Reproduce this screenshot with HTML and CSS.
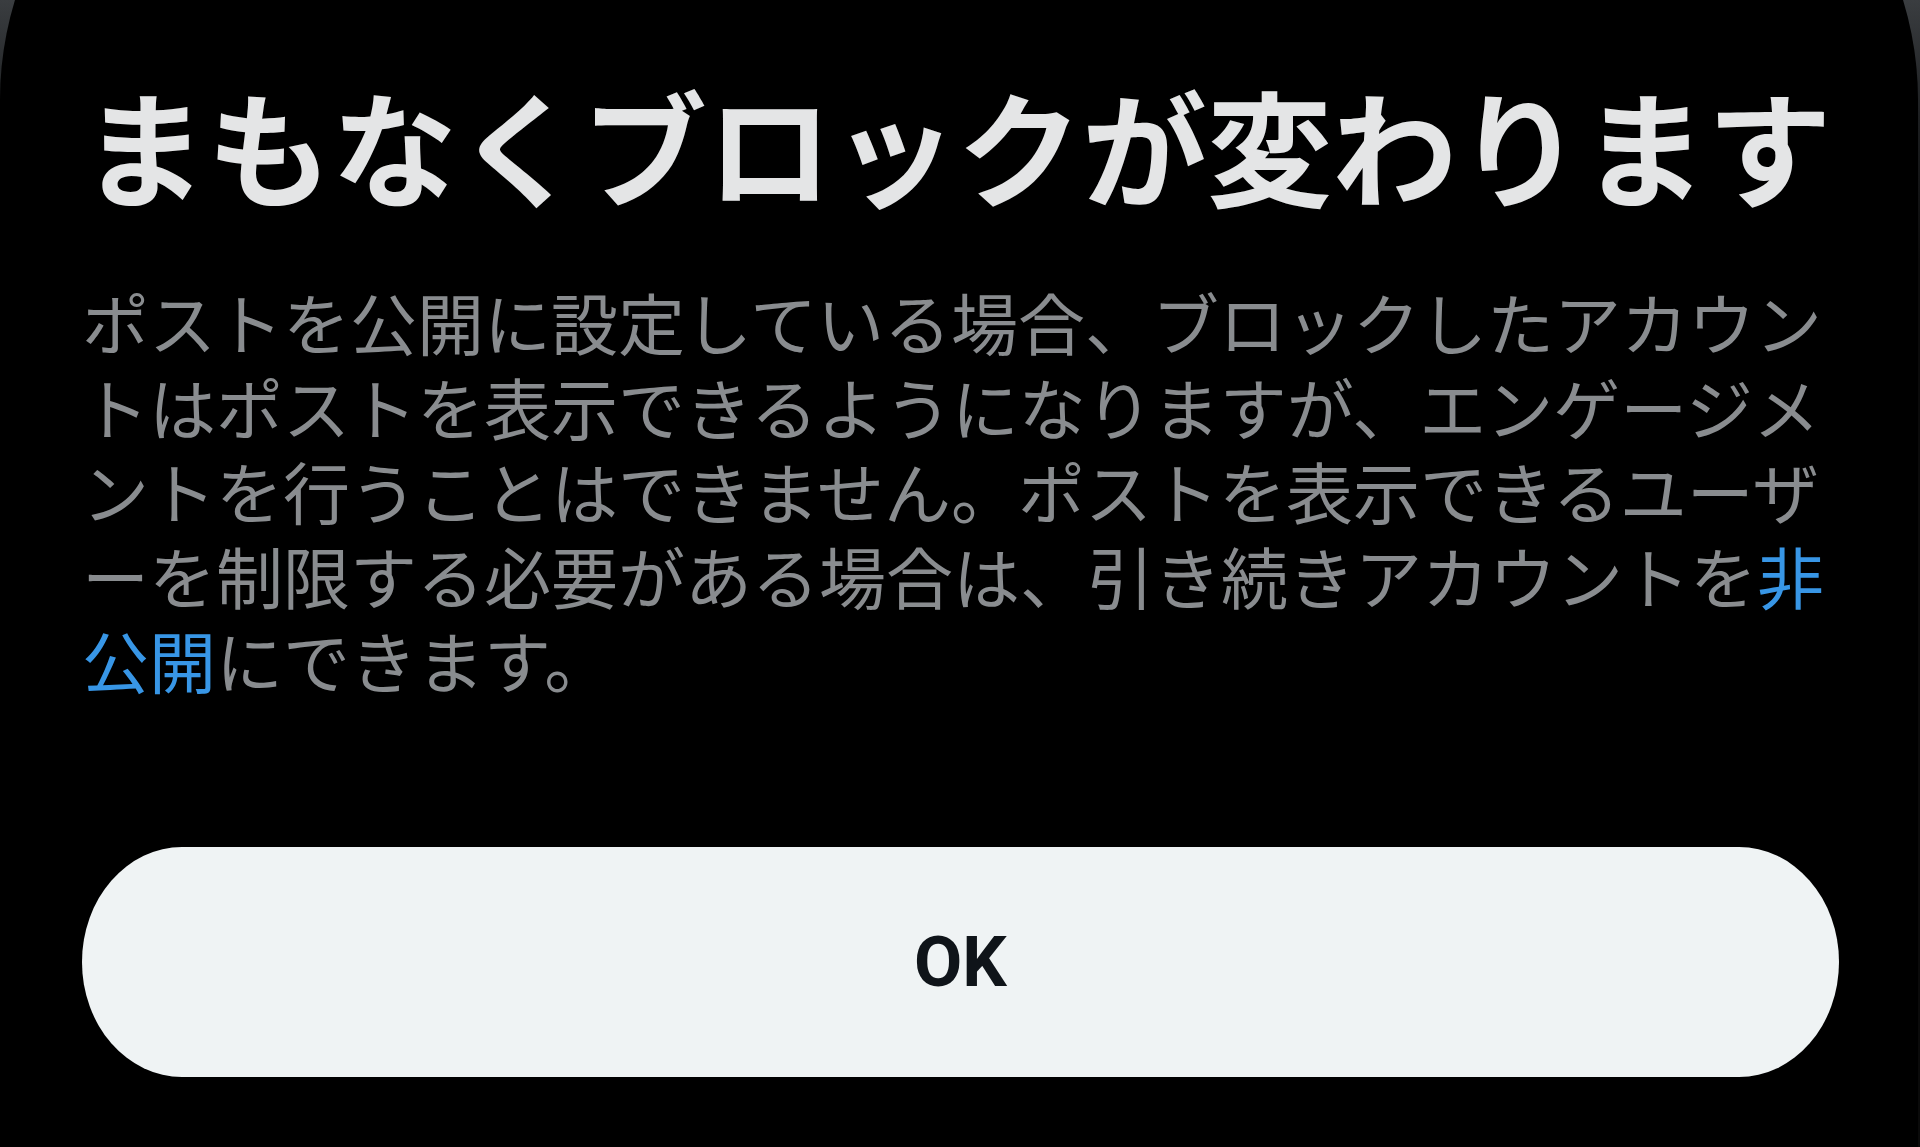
FILE: index.html
```html
<!DOCTYPE html>
<html lang="ja">
<head>
<meta charset="UTF-8">
<title>まもなくブロックが変わります</title>
<link rel="stylesheet" href="styles.css">
</head>
<body>

<div class="sheet">
    <h1 class="sheet-title">まもなくブロックが変わります</h1>

    <p class="sheet-text">ポストを公開に設定している場合、ブロックしたアカウントはポストを表示できるようになりますが、エンゲージメントを行うことはできません。ポストを表示できるユーザーを制限する必要がある場合は、引き続きアカウントを<a href="#" class="sheet-link">非公開</a>にできます。</p>

    <button class="sheet-button" type="button">OK</button>
</div>

</body>
</html>
```

FILE: styles.css
```css
/* Dimmed backdrop behind the sheet */
body {
    margin: 0;
    height: 100vh;
    overflow: hidden;
    background: linear-gradient(180deg, #3a3d40 0, #1c1e20 120px, #0a0a0a 260px);
    font-family: "Noto Sans CJK JP", "Noto Sans", sans-serif;
}

/* Black sheet with big rounded top corners */
.sheet {
    box-sizing: border-box;
    margin: -241px 2px 0 0;
    padding: 310px 80px 0 82px;
    height: 1388px;
    background: #000;
    border-radius: 341px 341px 0 0;
    display: flex;
    flex-direction: column;
}

.sheet-title {
    margin: 0;
    font-size: 125px;
    line-height: 150px;
    font-weight: 700;
    color: #e4e5e6;
    white-space: nowrap;
}

.sheet-text {
    margin: 60px 0 0 0;
    width: 1752px;
    font-size: 67px;
    line-height: 84.5px;
    font-weight: 400;
    color: #898c8f;
    line-break: anywhere;
}

.sheet-link {
    color: #3896e6;
    text-decoration: none;
}

.sheet-button {
    margin-top: 145px;
    width: 1757px;
    height: 230px;
    border: none;
    border-radius: 100px / 50%;
    background: #eff3f4;
    color: #0f1419;
    font-family: Roboto, "Liberation Sans", sans-serif;
    font-size: 70px;
    font-weight: 700;
    cursor: pointer;
}
```
